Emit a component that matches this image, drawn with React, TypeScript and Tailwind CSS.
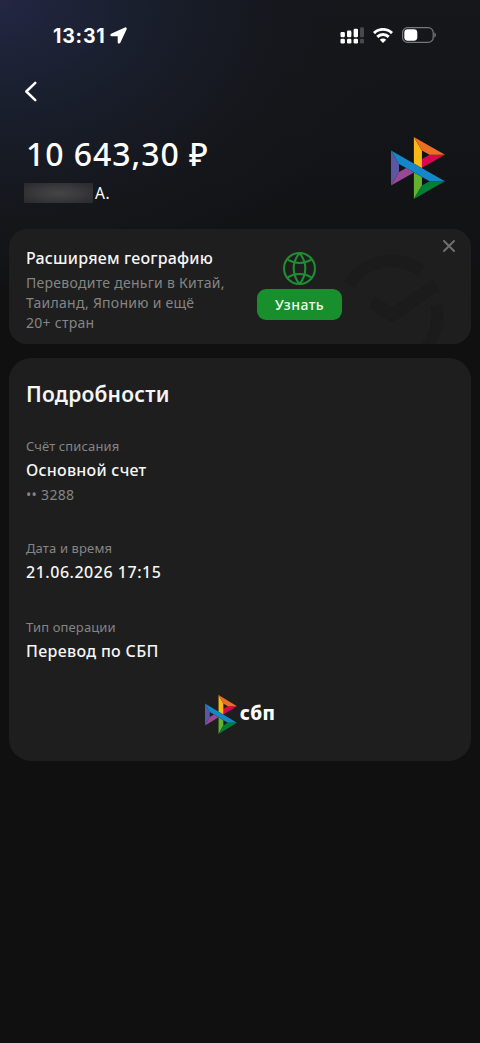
import type { ReactNode } from 'react';
import clsx from 'clsx';

const DETAILS = [
  { label: 'Счёт списания', value: 'Основной счет', note: '•• 3288', spacing: 'tracking-[0.25px]' },
  { label: 'Дата и время', value: '21.06.2026 17:15', spacing: 'tracking-[0.52px]' },
  { label: 'Тип операции', value: 'Перевод по СБП', spacing: 'tracking-[0.32px]' },
];

function SbpMark({ className }: { className?: string }) {
  return (
    <svg viewBox="0 0 97.3 120" preserveAspectRatio="none" className={className}>
      <path fill="#5B57A2" d="M0 26.12l14.532 25.975v15.844L.017 93.863z" />
      <path fill="#D90751" d="M55.797 42.643l13.617-8.346 27.868-.026-41.485 25.414z" />
      <path fill="#FAB718" d="M55.72 25.967l.077 34.39-14.566-8.95V0z" />
      <path fill="#ED6F26" d="M97.282 34.271l-27.869.026-13.693-8.33L41.231 0z" />
      <path fill="#63B22F" d="M55.797 94.007V77.322l-14.566-8.78.008 51.458z" />
      <path fill="#1487C9" d="M69.38 85.737L14.531 52.095 0 26.12l97.223 59.583z" />
      <path fill="#017F36" d="M41.24 120l14.556-25.993 13.583-8.27 27.843-.034z" />
      <path fill="#984995" d="M.017 93.863l41.333-25.32-13.896-8.526-12.922 7.922z" />
    </svg>
  );
}

function StatusBar() {
  return (
    <div className="flex h-[70px] items-center pl-[53px] pr-[44px] text-white">
      <span className="mt-[2px] font-['Inter',sans-serif] text-[19.5px] font-bold leading-6 tracking-[0.8px]">13:31</span>
      <svg viewBox="0 0 17 17" className="ml-[4px] mt-px h-[17px] w-[17px]" fill="currentColor" stroke="currentColor" strokeWidth="1.6" strokeLinejoin="round">
        <path d="M15.300 1.200 1.400 7.600c-.5.3-.4.900.2.900h6.400c.3 0 .5.2.5.5v6.200c0 .6.800.8 1.100.2L15.900 1.800c.2-.5-.1-.8-.6-.6z" />
      </svg>

      <div className="ml-auto flex items-center">
        {/* Dual SIM signal */}
        <svg viewBox="0 0 24 17" className="h-[17px] w-[24px]" fill="currentColor">
          <rect x="0.5" y="5" width="4.4" height="5.2" rx="1.3" />
          <rect x="7" y="3.6" width="4.4" height="6.6" rx="1.3" />
          <rect x="13.6" y="1.8" width="4.4" height="8.4" rx="1.3" />
          <rect x="20" y="0.2" width="4" height="10" rx="1.3" opacity="0.22" />
          <rect x="0.5" y="11.7" width="4.4" height="4.8" rx="1.3" />
          <rect x="7" y="11.7" width="4.4" height="4.8" rx="1.3" />
          <rect x="13.6" y="11.7" width="4.4" height="4.8" rx="1.3" />
          <rect x="20" y="11.7" width="4" height="4.8" rx="1.3" opacity="0.22" />
        </svg>
        <svg viewBox="0 0 20 15" className="ml-[9px] h-[15px] w-[20px]" fill="none" stroke="currentColor" strokeWidth="2.9">
          <path d="M1 5.100a12.800 12.800 0 0 1 18 0" />
          <path d="M4.300 8.900a8.100 8.100 0 0 1 11.400 0" />
          <path d="M6.800 11.800a4.600 4.600 0 0 1 6.400 0L10 15z" fill="currentColor" stroke="none" />
        </svg>
        <svg viewBox="0 0 34 16" className="ml-[9px] h-[16px] w-[34px]" fill="none">
          <rect x="0.6" y="0.6" width="30.6" height="14.8" rx="5" stroke="#77787b" strokeWidth="1.2" />
          <rect x="2.3" y="2.3" width="13" height="11.4" rx="3.4" fill="#fff" />
          <path d="M32.300 5.400v5.200c1-.5 1.600-1.400 1.600-2.600s-.6-2.100-1.600-2.600z" fill="#77787b" />
        </svg>
      </div>
    </div>
  );
}

function Card({ className, children }: { className?: string; children: ReactNode }) {
  return <section className={clsx('mx-[9px] bg-[#1e1e1e]', className)}>{children}</section>;
}

function Banner() {
  return (
    <Card className="relative mt-[25px] h-[115px] overflow-hidden rounded-[18px]">
      {/* Watermark */}
      <svg viewBox="0 0 130 115" className="absolute right-0 top-0 h-[115px] w-[130px]" fill="none" stroke="#1b1b1b">
        <path d="M8 56A49 49 0 0 1 80 42" strokeWidth="12" />
        <path d="M95 76A49 49 0 0 1 84 120" strokeWidth="12" />
        <path d="M31 73l20 13 44-30" strokeWidth="13" />
      </svg>

      <div className="relative flex">
        <div className="w-[248px] pl-[17px] pt-[18px]">
          <h2 className="whitespace-nowrap text-[16px] font-medium leading-[22px] tracking-[0.2px] text-[#f5f5f5]">
            Расширяем географию
          </h2>
          <p className="mt-[4px] whitespace-nowrap text-[14px] leading-[20px] tracking-[0.27px] text-[#858585]">
            Переводите деньги в Китай,
            <br />
            Таиланд, Японию и ещё
            <br />
            20+ стран
          </p>
        </div>
        <div className="flex w-[85px] flex-col items-center pt-[23px]">
          <svg viewBox="0 0 32 32" className="h-[33px] w-[33px]" fill="none" stroke="#218d32" strokeWidth="2">
            <circle cx="16" cy="16" r="15" />
            <path d="M16 1c-7.500 9-7.500 21 0 30M16 1c7.500 9 7.500 21 0 30" />
            <path d="M4.500 7.500c7 4.200 16 4.200 23 0M4.500 24.500c7-4.200 16-4.200 23 0" />
          </svg>
          <button className="mt-[4px] h-[31px] w-[85px] rounded-[9px] bg-[#188f2c] text-[14px] font-medium tracking-[0.45px] text-[#effaf0]">
            Узнать
          </button>
        </div>
      </div>

      <button aria-label="Закрыть" className="absolute right-[16px] top-[11px]">
        <svg viewBox="0 0 12 12" className="h-[12px] w-[12px]" stroke="#707070" strokeWidth="1.9" strokeLinecap="round">
          <path d="M1 1l10 10M11 1L1 11" />
        </svg>
      </button>
    </Card>
  );
}

export default function App() {
  return (
    <main className="flex h-[1043px] w-full flex-col overflow-hidden bg-[#101010] bg-[radial-gradient(ellipse_390px_290px_at_0_0,#242643_0%,#1c2134_24%,#181c27_48%,#15171c_72%,#15161900_100%),linear-gradient(180deg,#16171b_0px,#131417_160px,#101010_340px)] font-['Noto_Sans',sans-serif]">
      <StatusBar />

      <button aria-label="Назад" className="ml-[24px] mt-[11px] w-[14px]">
        <svg viewBox="0 0 14 21" className="h-[21px] w-[14px]" fill="none" stroke="#fff" strokeWidth="2.5" strokeLinecap="round" strokeLinejoin="round">
          <path d="M11.300 1.800L2.300 10.500l9 8.700" />
        </svg>
      </button>

      <header className="flex justify-between pl-[24px] pr-[35px]">
        <div className="pt-[32px]">
          <h1 className="pl-[2px] text-[32px] font-medium leading-[40px] tracking-[0.95px] text-white">10 643,30 ₽</h1>
          <div className="mt-[8px] flex items-center">
            <span className="h-[20px] w-[69px] bg-[radial-gradient(ellipse_at_center,#454548_0%,#3a3a3d_45%,#29292d_100%)]" />
            <span className="ml-[2px] text-[15.5px] leading-[22px] tracking-[0.6px] text-white">А.</span>
          </div>
        </div>
        <SbpMark className="mt-[35px] h-[62px] w-[54px]" />
      </header>

      <Banner />

      <Card className="mt-[14px] h-[403px] rounded-[22px] px-[17px] pt-[21px]">
        <h2 className="text-[21px] font-semibold leading-[30px] tracking-[0.2px] text-[#f5f5f5]">Подробности</h2>
        <dl className="mt-[27px] flex flex-col gap-[33px]">
          {DETAILS.map((item) => (
            <div key={item.label}>
              <dt className="text-[13px] leading-[20px] tracking-[0.13px] text-[#858585]">{item.label}</dt>
              <dd className={clsx('mt-[3px] text-[16px] font-medium leading-[23px] text-[#f5f5f5]', item.spacing)}>
                {item.value}
              </dd>
              {item.note && (
                <dd className="mt-[3px] text-[14px] leading-[20px] tracking-[0.3px] text-[#858585]">{item.note}</dd>
              )}
            </div>
          ))}
        </dl>
        <div className="mt-[32px] flex justify-center">
          <SbpMark className="h-[39px] w-[32px]" />
          <span className="ml-[3px] mt-[6px] text-[19px] font-extrabold leading-[24px] tracking-[0.4px] text-white">сбп</span>
        </div>
      </Card>
    </main>
  );
}
